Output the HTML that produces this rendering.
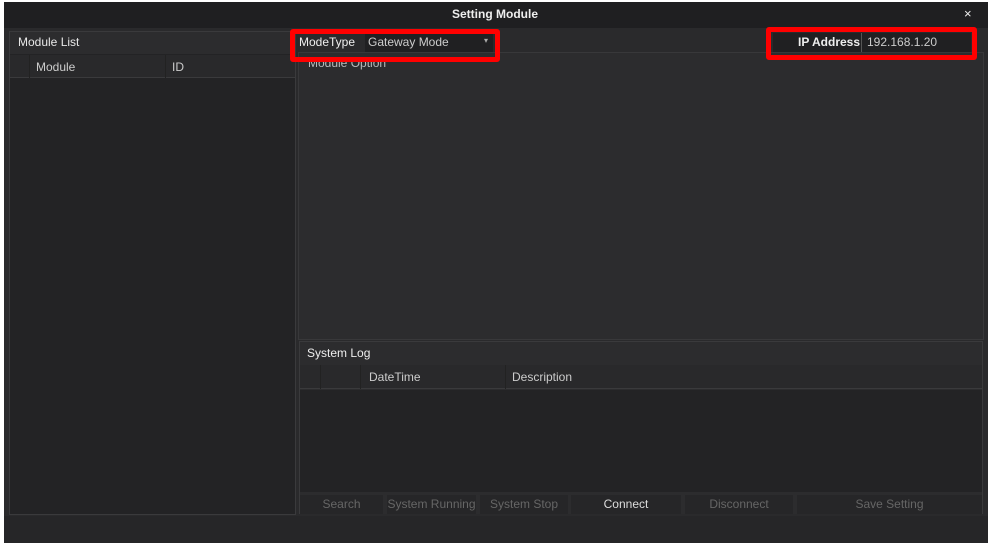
<!DOCTYPE html>
<html><head><style>
*{margin:0;padding:0;box-sizing:border-box}
body{width:1000px;height:555px;background:#fff;position:relative;overflow:hidden;font-family:"Liberation Sans",sans-serif;font-size:12px;color:#ddd}
.a{position:absolute}
</style></head><body>
<div class="a" style="left:4px;top:2px;width:984px;height:541px;background:#2a2a2c"></div>
<div class="a" style="left:4px;top:2px;width:984px;height:26px;background:#1f1f21"></div>
<div class="a" style="left:0;top:7px;width:990px;text-align:center;font-weight:bold;font-size:12px;color:#eee">Setting Module</div>
<div class="a" style="left:964px;top:6px;font-size:13px;color:#eee">×</div>
<!-- left -->
<div class="a" style="left:9px;top:31px;width:287px;height:484px;background:#232325;border:1px solid #3a3a3c"></div>
<div class="a" style="left:10px;top:32px;width:285px;height:22px;background:#2c2c2e"></div>
<div class="a" style="left:18px;top:35px;color:#e8e8e8">Module List</div>
<div class="a" style="left:10px;top:55px;width:285px;height:23px;background:#29292b;border-bottom:1px solid #3a3a3c"></div>
<div class="a" style="left:29px;top:55px;width:1px;height:23px;background:#222"></div>
<div class="a" style="left:165px;top:55px;width:1px;height:23px;background:#222"></div>
<div class="a" style="left:36px;top:60px;color:#ccc">Module</div>
<div class="a" style="left:172px;top:60px;color:#ccc">ID</div>
<!-- right top -->
<div class="a" style="left:298px;top:30px;width:686px;height:22px;background:#2a2a2c"></div>
<div class="a" style="left:365px;top:33px;width:128px;height:19px;background:#202022"></div>
<div class="a" style="left:299px;top:35px;color:#eee">ModeType</div>
<div class="a" style="left:368px;top:35px;color:#ccc">Gateway Mode</div>
<div class="a" style="left:484px;top:36px;color:#aaa;font-size:8px">▾</div>
<div class="a" style="left:773px;top:33px;width:198px;height:19px;background:#202022"></div>
<div class="a" style="left:798px;top:35px;color:#eee;font-weight:bold">IP Address</div>
<div class="a" style="left:861px;top:33px;width:1px;height:19px;background:#555"></div>
<div class="a" style="left:867px;top:35px;color:#ccc">192.168.1.20</div>
<div class="a" style="left:298px;top:52px;width:686px;height:288px;background:#2c2c2e;border:1px solid #38383a"></div>
<div class="a" style="left:308px;top:56px;color:#bbb">Module Option</div>
<!-- system log -->
<div class="a" style="left:299px;top:341px;width:684px;height:173px;background:#2c2c2e;border:1px solid #3a3a3c"></div>
<div class="a" style="left:307px;top:346px;color:#eee">System Log</div>
<div class="a" style="left:300px;top:365px;width:682px;height:24px;background:#29292b;border-bottom:1px solid #3a3a3c"></div>
<div class="a" style="left:320px;top:365px;width:1px;height:24px;background:#222"></div>
<div class="a" style="left:360px;top:365px;width:1px;height:24px;background:#222"></div>
<div class="a" style="left:505px;top:365px;width:1px;height:24px;background:#222"></div>
<div class="a" style="left:369px;top:370px;color:#ccc">DateTime</div>
<div class="a" style="left:512px;top:370px;color:#ccc">Description</div>
<div class="a" style="left:300px;top:390px;width:682px;height:102px;background:#232325"></div>
<div class="a" style="left:300px;top:494px;width:682px;height:20px;background:#2c2c2e"></div>
<div class="a" style="left:300px;top:495px;width:83px;height:19px;background:#262628;color:#666;text-align:center;line-height:19px">Search</div>
<div class="a" style="left:387px;top:495px;width:89px;height:19px;background:#262628;color:#666;text-align:center;line-height:19px">System Running</div>
<div class="a" style="left:480px;top:495px;width:88px;height:19px;background:#262628;color:#666;text-align:center;line-height:19px">System Stop</div>
<div class="a" style="left:571px;top:495px;width:110px;height:19px;background:#262628;color:#ddd;text-align:center;line-height:19px">Connect</div>
<div class="a" style="left:685px;top:495px;width:108px;height:19px;background:#262628;color:#666;text-align:center;line-height:19px">Disconnect</div>
<div class="a" style="left:797px;top:495px;width:185px;height:19px;background:#262628;color:#666;text-align:center;line-height:19px">Save Setting</div>
<div class="a" style="left:4px;top:516px;width:984px;height:27px;background:#262628"></div>
<!-- red boxes -->
<div class="a" style="left:290px;top:29px;width:210px;height:33px;border:5px solid #f00;border-radius:3px"></div>
<div class="a" style="left:766px;top:27px;width:211px;height:33px;border:5px solid #f00;border-radius:3px"></div>
</body></html>
